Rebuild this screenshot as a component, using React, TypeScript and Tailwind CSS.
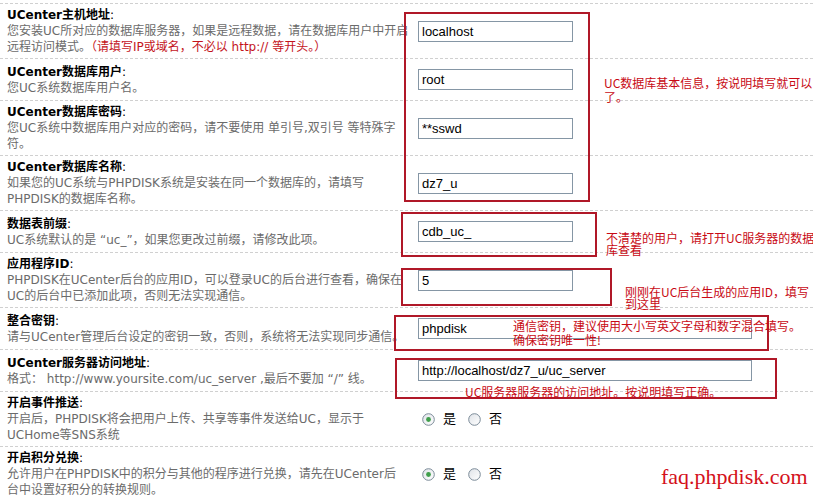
import React from 'react';

type Row = {
  title: string;
  desc: React.ReactNode[];
  control: { kind: 'input'; value: string; wide?: boolean } | { kind: 'radio' };
};

const ROWS: Row[] = [
  {
    title: 'UCenter主机地址',
    desc: [
      '您安装UC所对应的数据库服务器，如果是远程数据，请在数据库用户中开启',
      <>
        远程访问模式。<span className="text-[#c4141c]">（请填写IP或域名，不必以 http:// 等开头。）</span>
      </>,
    ],
    control: { kind: 'input', value: 'localhost' },
  },
  {
    title: 'UCenter数据库用户',
    desc: ['您UC系统数据库用户名。'],
    control: { kind: 'input', value: 'root' },
  },
  {
    title: 'UCenter数据库密码',
    desc: ['您UC系统中数据库用户对应的密码，请不要使用 单引号,双引号 等特殊字', '符。'],
    control: { kind: 'input', value: '**sswd' },
  },
  {
    title: 'UCenter数据库名称',
    desc: ['如果您的UC系统与PHPDISK系统是安装在同一个数据库的，请填写', 'PHPDISK的数据库名称。'],
    control: { kind: 'input', value: 'dz7_u' },
  },
  {
    title: '数据表前缀',
    desc: ['UC系统默认的是 “uc_”，如果您更改过前缀，请修改此项。'],
    control: { kind: 'input', value: 'cdb_uc_' },
  },
  {
    title: '应用程序ID',
    desc: ['PHPDISK在UCenter后台的应用ID，可以登录UC的后台进行查看，确保在', 'UC的后台中已添加此项，否则无法实现通信。'],
    control: { kind: 'input', value: '5' },
  },
  {
    title: '整合密钥',
    desc: ['请与UCenter管理后台设定的密钥一致，否则，系统将无法实现同步通信。'],
    control: { kind: 'input', value: 'phpdisk', wide: true },
  },
  {
    title: 'UCenter服务器访问地址',
    desc: ['格式： http://www.yoursite.com/uc_server ,最后不要加 “/” 线。'],
    control: { kind: 'input', value: 'http://localhost/dz7_u/uc_server', wide: true },
  },
  {
    title: '开启事件推送',
    desc: ['开启后，PHPDISK将会把用户上传、共享等事件发送给UC，显示于', 'UCHome等SNS系统'],
    control: { kind: 'radio' },
  },
  {
    title: '开启积分兑换',
    desc: ['允许用户在PHPDISK中的积分与其他的程序进行兑换，请先在UCenter后', '台中设置好积分的转换规则。'],
    control: { kind: 'radio' },
  },
];

const Radio = ({ checked }: { checked?: boolean }) => (
  <svg width="13" height="13" viewBox="0 0 13 13" className="shrink-0">
    <defs>
      <linearGradient id="rb" x1="0" y1="0" x2="1" y2="1">
        <stop offset="0" stopColor="#dfe3e8" />
        <stop offset="1" stopColor="#ffffff" />
      </linearGradient>
    </defs>
    <circle cx="6.5" cy="6.5" r="5.8" fill="url(#rb)" stroke="#7b8a98" strokeWidth="1" />
    {checked && <circle cx="6.5" cy="6.5" r="2.4" fill="#3f9e4b" />}
  </svg>
);

const RadioPair = () => (
  <div className="flex items-center text-[13px] text-black">
    <Radio checked />
    <span className="ml-[8px] mr-[12px]">是</span>
    <Radio />
    <span className="ml-[8px]">否</span>
  </div>
);

// red hand-drawn call-out boxes and notes on top of the form
const Notes = () => (
  <div className="absolute inset-0 pointer-events-none text-[12px] text-[#c80a14] font-['Noto_Sans_CJK_SC',sans-serif]">
    <div className="absolute left-[404px] top-[12px] w-[186px] h-[190px] border-2 border-[#b01828]" />
    <div className="absolute left-[401px] top-[212px] w-[196px] h-[45px] border-2 border-[#b01828]" />
    <div className="absolute left-[401px] top-[268px] w-[211px] h-[38px] border-2 border-[#b01828]" />
    <div className="absolute left-[394px] top-[315px] w-[375px] h-[36px] border-2 border-[#b01828]" />
    <div className="absolute left-[395px] top-[358px] w-[382px] h-[41px] border-2 border-[#b01828]" />

    <div className="absolute left-[604px] top-[76px] leading-[14px] whitespace-nowrap">
      UC数据库基本信息，按说明填写就可以<br />了。
    </div>
    <div className="absolute left-[606px] top-[232px] leading-[12px] whitespace-nowrap">
      不清楚的用户，请打开UC服务器的数据<br />库查看
    </div>
    <div className="absolute left-[625px] top-[286px] leading-[12px] whitespace-nowrap">
      刚刚在UC后台生成的应用ID，填写<br />到这里
    </div>
    <div className="absolute left-[513px] top-[319px] leading-[14px] whitespace-nowrap">
      通信密钥，建议使用大小写英文字母和数字混合填写。<br />确保密钥唯一性!
    </div>
    <div className="absolute left-[465px] top-[385px] leading-[13px] whitespace-nowrap">
      UC服务器服务器的访问地址。按说明填写正确。
    </div>
    <div className="absolute left-[661px] top-[465px] text-[22px] leading-[24px] text-[#d4111b] font-['Liberation_Serif',serif]">
      faq.phpdisk.com
    </div>
  </div>
);

export default function App() {
  return (
    <div className="relative w-[813px] h-[503px] overflow-hidden bg-white pt-[3px] font-['DejaVu_Sans','Noto_Sans_CJK_SC',sans-serif]">
      {ROWS.map((row) => (
        <div key={row.title} className="flex border-t border-dashed border-[#d0d0d0]">
          <div className="w-[410px] shrink-0 pl-[7px] py-[3px] flex flex-col justify-center leading-[16px] whitespace-nowrap">
            <div className="text-[12px] text-black">
              <span className="font-bold">{row.title}</span>:
            </div>
            {row.desc.map((line, i) => (
              <div key={i} className="text-[12px] text-[#6b6b6b]">
                {line}
              </div>
            ))}
          </div>
          <div className="flex items-center pl-[8px] py-[10px]">
            {row.control.kind === 'input' ? (
              <input
                readOnly
                value={row.control.value}
                className={`h-[21px] border border-[#8596a5] px-[3px] text-[13px] text-black font-['Liberation_Sans',sans-serif] outline-none ${
                  row.control.wide ? 'w-[334px]' : 'w-[155px]'
                }`}
              />
            ) : (
              <div className="pl-[4px]">
                <RadioPair />
              </div>
            )}
          </div>
        </div>
      ))}
      <Notes />
    </div>
  );
}
